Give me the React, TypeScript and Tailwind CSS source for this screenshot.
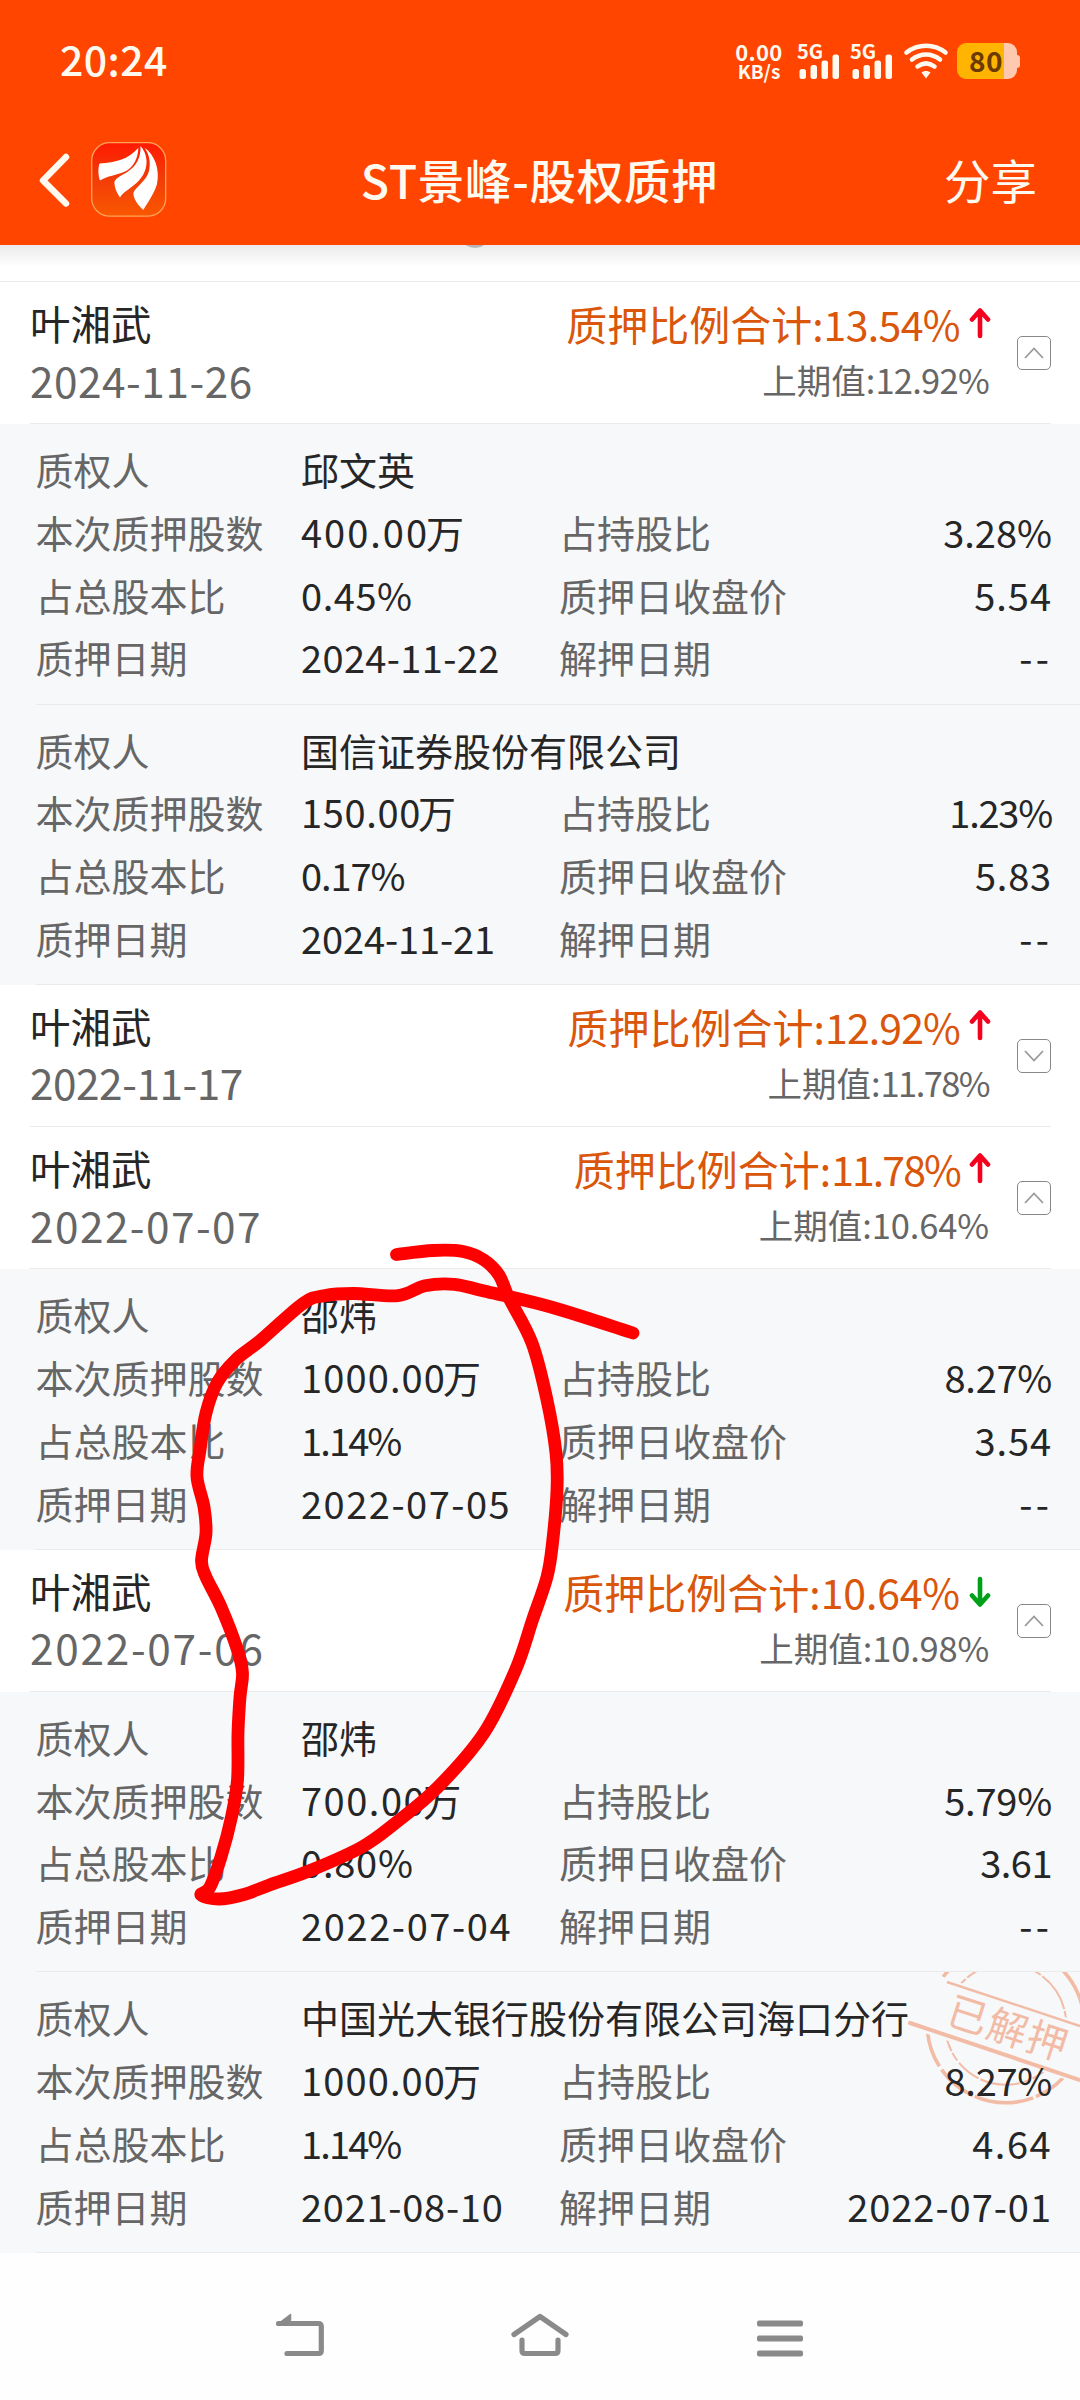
import { ReactNode } from "react";

type Pledge = {
  pledgee: string;
  shares: string;
  totalRatio: string;
  startDate: string;
  holdRatio: string;
  closePrice: string;
  endDate: string;
  released?: boolean;
};

type Group = {
  name: string;
  date: string;
  ratio: string;
  previous: string;
  trend: "up" | "down";
  open: boolean;
  pledges: Pledge[];
};

const groups: Group[] = [
  {
    name: "叶湘武",
    date: "2024-11-26",
    ratio: "13.54%",
    previous: "12.92%",
    trend: "up",
    open: true,
    pledges: [
      { pledgee: "邱文英", shares: "400.00", totalRatio: "0.45%", startDate: "2024-11-22", holdRatio: "3.28%", closePrice: "5.54", endDate: "--" },
      { pledgee: "国信证券股份有限公司", shares: "150.00", totalRatio: "0.17%", startDate: "2024-11-21", holdRatio: "1.23%", closePrice: "5.83", endDate: "--" },
    ],
  },
  { name: "叶湘武", date: "2022-11-17", ratio: "12.92%", previous: "11.78%", trend: "up", open: false, pledges: [] },
  {
    name: "叶湘武",
    date: "2022-07-07",
    ratio: "11.78%",
    previous: "10.64%",
    trend: "up",
    open: true,
    pledges: [
      { pledgee: "邵炜", shares: "1000.00", totalRatio: "1.14%", startDate: "2022-07-05", holdRatio: "8.27%", closePrice: "3.54", endDate: "--" },
    ],
  },
  {
    name: "叶湘武",
    date: "2022-07-06",
    ratio: "10.64%",
    previous: "10.98%",
    trend: "down",
    open: true,
    pledges: [
      { pledgee: "邵炜", shares: "700.00", totalRatio: "0.80%", startDate: "2022-07-04", holdRatio: "5.79%", closePrice: "3.61", endDate: "--" },
      { pledgee: "中国光大银行股份有限公司海口分行", shares: "1000.00", totalRatio: "1.14%", startDate: "2021-08-10", holdRatio: "8.27%", closePrice: "4.64", endDate: "2022-07-01", released: true },
    ],
  },
];

// How much each glyph should be wider (or narrower) than the font's tabular one, in em
const glyphDelta: Record<string, number> = {
  "0": 0.065,
  "1": -0.115,
  "2": 0.01,
  "3": 0.015,
  "4": 0.055,
  "5": 0.025,
  "6": 0.045,
  "7": -0.02,
  "8": 0.045,
  "9": 0.04,
  "-": 0.083,
  "%": -0.071,
};

function Num({ text }: { text: string }) {
  const delta = [...text].reduce((sum, char) => sum + (glyphDelta[char] ?? 0), 0);
  const spacing = delta / text.length;
  return (
    <span className="whitespace-nowrap" style={{ letterSpacing: `${spacing.toFixed(4)}em` }}>
      {text}
    </span>
  );
}

function Signal() {
  return (
    <div className="relative h-9 w-[43px]">
      <span className="absolute -left-px top-0 text-[20px] font-bold leading-[16px]">5G</span>
      <svg className="absolute left-0 top-0" width="43" height="36" fill="#fffaf0">
        <rect x="1.500" y="26" width="6.5" height="10" rx="2.5" />
        <rect x="12.500" y="22" width="6.5" height="14" rx="2.5" />
        <rect x="23.500" y="17.5" width="6.5" height="18.5" rx="2.5" />
        <rect x="34.500" y="11.5" width="6.5" height="24.5" rx="2.5" />
      </svg>
    </div>
  );
}

function StatusBar() {
  return (
    <div className="flex h-[122px] items-center justify-between pl-[60px] pr-[60px] text-[#fffaf0]">
      <div className="pb-[5px] text-[41px] font-medium leading-none tracking-[0.4px]">20:24</div>
      <div className="flex h-9 items-start">
        <div className="-mt-px mr-[15px] flex w-[48px] flex-col items-center font-bold">
          <span className="text-[22px] leading-[18px] tracking-[0.3px]">0.00</span>
          <span className="text-[19px] leading-[22px]">KB/s</span>
        </div>
        <Signal />
        <div className="w-[10px]" />
        <Signal />
        <svg className="ml-[9px]" width="46" height="36" fill="none" stroke="#fffaf0" strokeWidth="4.6" strokeLinecap="round">
          <path d="M3.5 9.5C15 .5 31 .5 42.500 9.500" />
          <path d="M9 16.500C17.500 9.800 28.500 9.800 37 16.500" />
          <path d="M14.500 23.500C20 19.500 26 19.500 31.500 23.500" />
          <path d="M18.500 29.500C21 27.500 25 27.500 27.500 29.500L23 35.500Z" fill="#fffaf0" stroke="none" />
        </svg>
        <div className="ml-[8px] flex items-center">
          <div className="h-9 w-[60px] rounded-[9px] bg-linear-to-r from-[#ffb400] from-78% to-[#ffc9b0] to-78% pr-0.5 text-center text-[28px] font-bold leading-[34px] tracking-[0.6px] text-[#6b3a00]">
            80
          </div>
          <div className="h-[13px] w-[3px] rounded-r-sm bg-[#ffc9b0]" />
        </div>
      </div>
    </div>
  );
}

function Logo() {
  return (
    <svg width="76" height="76" viewBox="0 0 76 76">
      <defs>
        <linearGradient id="logo" x1="0" y1="0" x2="0" y2="1">
          <stop offset="0" stopColor="#ff1a00" />
          <stop offset="0.45" stopColor="#f23a08" />
          <stop offset="1" stopColor="#fa5800" />
        </linearGradient>
      </defs>
      <rect x="0.7" y="0.7" width="74" height="73.500" rx="18" fill="url(#logo)" stroke="#ffa25c" strokeWidth="1.3" />
      <g fill="#fff">
        <path d="M8.500 21.500C25 20.500 38 17 47.400 5.800C47 17 42 26 34 29.500C26 33 16 34 9 38.500C7 33 7 26 8.500 21.500Z" />
        <path d="M49.500 4C50 16 45 24 37 29.500C31 33.500 26 35 23.500 39.500C23 45 26 51 29 55.500C32 50 39 47 46 40.500C53 34 56 26 55.500 18C54.500 10 52 7 49.500 4Z" />
        <path d="M53.600 5.800C58 12 60 20 58 29C56 38 45 45 42.500 50.500C42 57 47 63 52.300 68C57 60 63 52 66 42C69 28 64 13 53.600 5.800Z" />
      </g>
    </svg>
  );
}

function TitleBar() {
  return (
    <div className="grid h-[123px] grid-cols-[1fr_auto_1fr] items-start pl-[42px] pr-[43px] text-[#fffaf0]">
      <div className="-ml-1 flex items-center gap-[20px] pt-[19.500px]">
        <svg width="33" height="56" fill="none" stroke="#fffaf0" strokeWidth="6.5" strokeLinecap="round" strokeLinejoin="round">
          <path d="M28 5L5 28.500L28 51.500" />
        </svg>
        <Logo />
      </div>
      <div className="pt-[22.500px] text-[46.500px] font-medium leading-[68px] tracking-[0.7px]">ST景峰-股权质押</div>
      <div className="pt-[22.500px] text-right text-[46.500px] leading-[68px]">分享</div>
    </div>
  );
}

function TrendArrow({ trend }: { trend: "up" | "down" }) {
  return (
    <svg
      className={trend === "up" ? "text-[#f5001d]" : "mt-[4px] rotate-180 text-[#00a018]"}
      width="22"
      height="34"
      fill="none"
      stroke="currentColor"
      strokeWidth="4.6"
      strokeLinecap="round"
      strokeLinejoin="round"
    >
      <path d="M11 30V5M3 13.500L11 4.500L19 13.500" />
    </svg>
  );
}

function ToggleBox({ open }: { open: boolean }) {
  return (
    <div className="flex size-[34px] items-center justify-center rounded-[5px] border-[1.5px] border-[#888]">
      <svg className={open ? "" : "rotate-180"} width="22" height="14" fill="none" stroke="#999" strokeWidth="1.8">
        <path d="M2 12L11 2.500L20 12" />
      </svg>
    </div>
  );
}

function GroupHeader({ group }: { group: Group }) {
  return (
    <div className="h-[142.200px] bg-white pl-[30px] pr-[29px]">
      <div className="flex h-full justify-between border-b border-[#ebebeb]">
        <div className="pt-[11px]">
          <div className="text-[40.500px] leading-[60px] text-[#262626]">{group.name}</div>
          <div className="-mt-[3.500px] text-[42.300px] leading-[60px] text-[#666]">
            <Num text={group.date} />
          </div>
        </div>
        <div className="flex">
          <div className="flex flex-col items-end pt-[11px]">
            <div className="flex h-[60px] items-center text-[41px] leading-[60px] text-[#d9560b]">
              <span>质押比例合计:</span>
              <Num text={group.ratio} />
              <span className="-mt-px ml-[9px]">
                <TrendArrow trend={group.trend} />
              </span>
            </div>
            <div className="-mt-[4px] pr-[2px] text-[34.500px] leading-[60px] text-[#666]">
              上期值:
              <Num text={group.previous} />
            </div>
          </div>
          <div className="ml-[26px] pt-[54px]">
            <ToggleBox open={group.open} />
          </div>
        </div>
      </div>
    </div>
  );
}

// "Released" seal, cut off by the screen edge on the right and the row edge on top
function Stamp() {
  return (
    <svg className="absolute right-0 top-0" width="180" height="140" viewBox="900 1972 180 140" fill="none" stroke="#f2bba6">
      <defs>
        <clipPath id="seal">
          <path d="M900 1972H1080V2022L900 1963ZM900 2025L1080 2084V2110H900Z" />
        </clipPath>
      </defs>
      <g clipPath="url(#seal)">
        <circle cx="1005.700" cy="2024.300" r="78.500" strokeWidth="3.6" strokeDasharray="92 3 60 2 41 4" />
        <circle cx="1005.700" cy="2024.300" r="60.500" strokeWidth="2" strokeDasharray="40 2 25 3 9 2" />
      </g>
      <path d="M947 1982L1080 2026" strokeWidth="2.4" />
      <path d="M910 2023L1080 2080" strokeWidth="4" strokeLinecap="round" />
      <text x="1008" y="2043" fill="#f2bba6" stroke="none" fontSize="40" letterSpacing="1.5" textAnchor="middle" transform="rotate(18 1008 2029)">
        已解押
      </text>
    </svg>
  );
}

function Row({ label, value, label2, value2 }: { label: string; value: ReactNode; label2?: string; value2?: string }) {
  return (
    <div className="flex h-[62.700px] items-center whitespace-nowrap">
      <div className="w-[265.500px] text-[#666]">{label}</div>
      <div className="w-[258px]">{value}</div>
      {label2 && <div className="flex-1 text-[#666]">{label2}</div>}
      {value2 && (
        <div className="text-right">
          <Num text={value2} />
        </div>
      )}
    </div>
  );
}

function PledgeBlock({ pledge }: { pledge: Pledge }) {
  return (
    <div className="relative h-[280.400px] bg-[#f7f8fa]">
      {pledge.released && <Stamp />}
      <div className="relative ml-[35.500px] h-full border-b border-[#ebebeb] pr-[28px] pt-[13.800px] text-[38px] leading-[62px] text-[#262626]">
        <Row label="质权人" value={pledge.pledgee} />
        <Row
          label="本次质押股数"
          value={
            <>
              <Num text={pledge.shares} />
              <span className="-ml-[3px]">万</span>
            </>
          }
          label2="占持股比"
          value2={pledge.holdRatio}
        />
        <Row label="占总股本比" value={<Num text={pledge.totalRatio} />} label2="质押日收盘价" value2={pledge.closePrice} />
        <Row label="质押日期" value={<Num text={pledge.startDate} />} label2="解押日期" value2={pledge.endDate} />
      </div>
    </div>
  );
}

const strokePoints: [number, number][] = [
  [396.500, 1254.5], [433, 1250.5], [463, 1251.5], [484, 1260], [499, 1275], [508.500, 1297], [532, 1343], [547, 1400],
  [556, 1453], [557, 1490], [552.500, 1543], [547, 1577], [532.500, 1620], [515.500, 1670], [484, 1733], [438, 1787],
  [395.500, 1823], [362, 1847], [311.500, 1870], [269.500, 1885], [244, 1894.5], [219, 1899], [201, 1895], [210, 1887],
  [221, 1857], [231.500, 1817], [237.500, 1780], [238, 1733], [240, 1697], [242.500, 1673], [237.500, 1650], [221, 1607],
  [206, 1577], [201.500, 1561], [206, 1533], [204, 1507], [197, 1477], [200, 1450], [206, 1413], [217, 1383],
  [235.500, 1360], [261, 1340], [303, 1303.5], [324, 1295.7], [353.500, 1293.5], [398, 1295.7], [425, 1285.7],
  [454.500, 1284.3], [484, 1291], [551, 1307], [633, 1333],
];

// Catmull-Rom through the sampled points
function smoothPath(points: [number, number][]) {
  let d = `M${points[0][0]} ${points[0][1]}`;
  for (let i = 0; i < points.length - 1; i++) {
    const p0 = points[i - 1] ?? points[i];
    const p1 = points[i];
    const p2 = points[i + 1];
    const p3 = points[i + 2] ?? p2;
    d += `C${p1[0] + (p2[0] - p0[0]) / 6} ${p1[1] + (p2[1] - p0[1]) / 6} ${p2[0] - (p3[0] - p1[0]) / 6} ${p2[1] - (p3[1] - p1[1]) / 6} ${p2[0]} ${p2[1]}`;
  }
  return d;
}

function RedPen() {
  return (
    <svg className="pointer-events-none absolute left-0 top-0" width="1080" height="2400" fill="none">
      <path d={smoothPath(strokePoints)} stroke="#ff0000" strokeWidth="12.8" strokeLinecap="round" strokeLinejoin="round" />
    </svg>
  );
}

function NavBar() {
  return (
    <div className="flex flex-1 items-start justify-between bg-[#fefefe] pl-[275px] pr-[275px] pt-[59px]">
      <svg width="50" height="46" fill="none" stroke="#8a8a8a" strokeWidth="5.2" strokeLinecap="round" strokeLinejoin="round">
        <path d="M3.500 11.500H43.500Q46.300 11.500 46.300 14.500V38.500Q46.300 41.500 43.500 41.500H12" />
        <path d="M15.500 2.500V8L8 12H3Z" fill="#8a8a8a" strokeWidth="1.500" />
      </svg>
      <svg width="60" height="46" fill="none" stroke="#8a8a8a" strokeWidth="5.2" strokeLinecap="round" strokeLinejoin="round">
        <path d="M4 22.500L30 4.500L56 22.500" />
        <path d="M12 28V38.500Q12 41.500 15 41.500H45Q48 41.500 48 38.500V28" />
      </svg>
      <svg width="50" height="46" fill="#8a8a8a">
        <rect x="2" y="8.500" width="46" height="6" rx="2" />
        <rect x="2" y="23.500" width="46" height="6" rx="2" />
        <rect x="2" y="38.500" width="46" height="6" rx="2" />
      </svg>
    </div>
  );
}

export default function App() {
  return (
    <div className="relative flex h-[2400px] w-[1080px] flex-col overflow-hidden bg-white font-['Noto_Sans_CJK_SC',sans-serif]">
      <div className="h-[245px] bg-[#ff4500]">
        <StatusBar />
        <TitleBar />
      </div>
      <div className="h-[37px] overflow-hidden border-b border-[#ebebeb] bg-linear-to-b from-[#ebebeb] to-white to-60%">
        <div className="-mt-[29px] ml-[459px] size-[32px] rounded-full bg-[#b8b4b4]" />
      </div>
      {groups.map((group) => (
        <div key={group.date}>
          <GroupHeader group={group} />
          {group.pledges.map((pledge) => (
            <PledgeBlock pledge={pledge} key={pledge.startDate} />
          ))}
        </div>
      ))}
      <NavBar />
      <RedPen />
    </div>
  );
}
